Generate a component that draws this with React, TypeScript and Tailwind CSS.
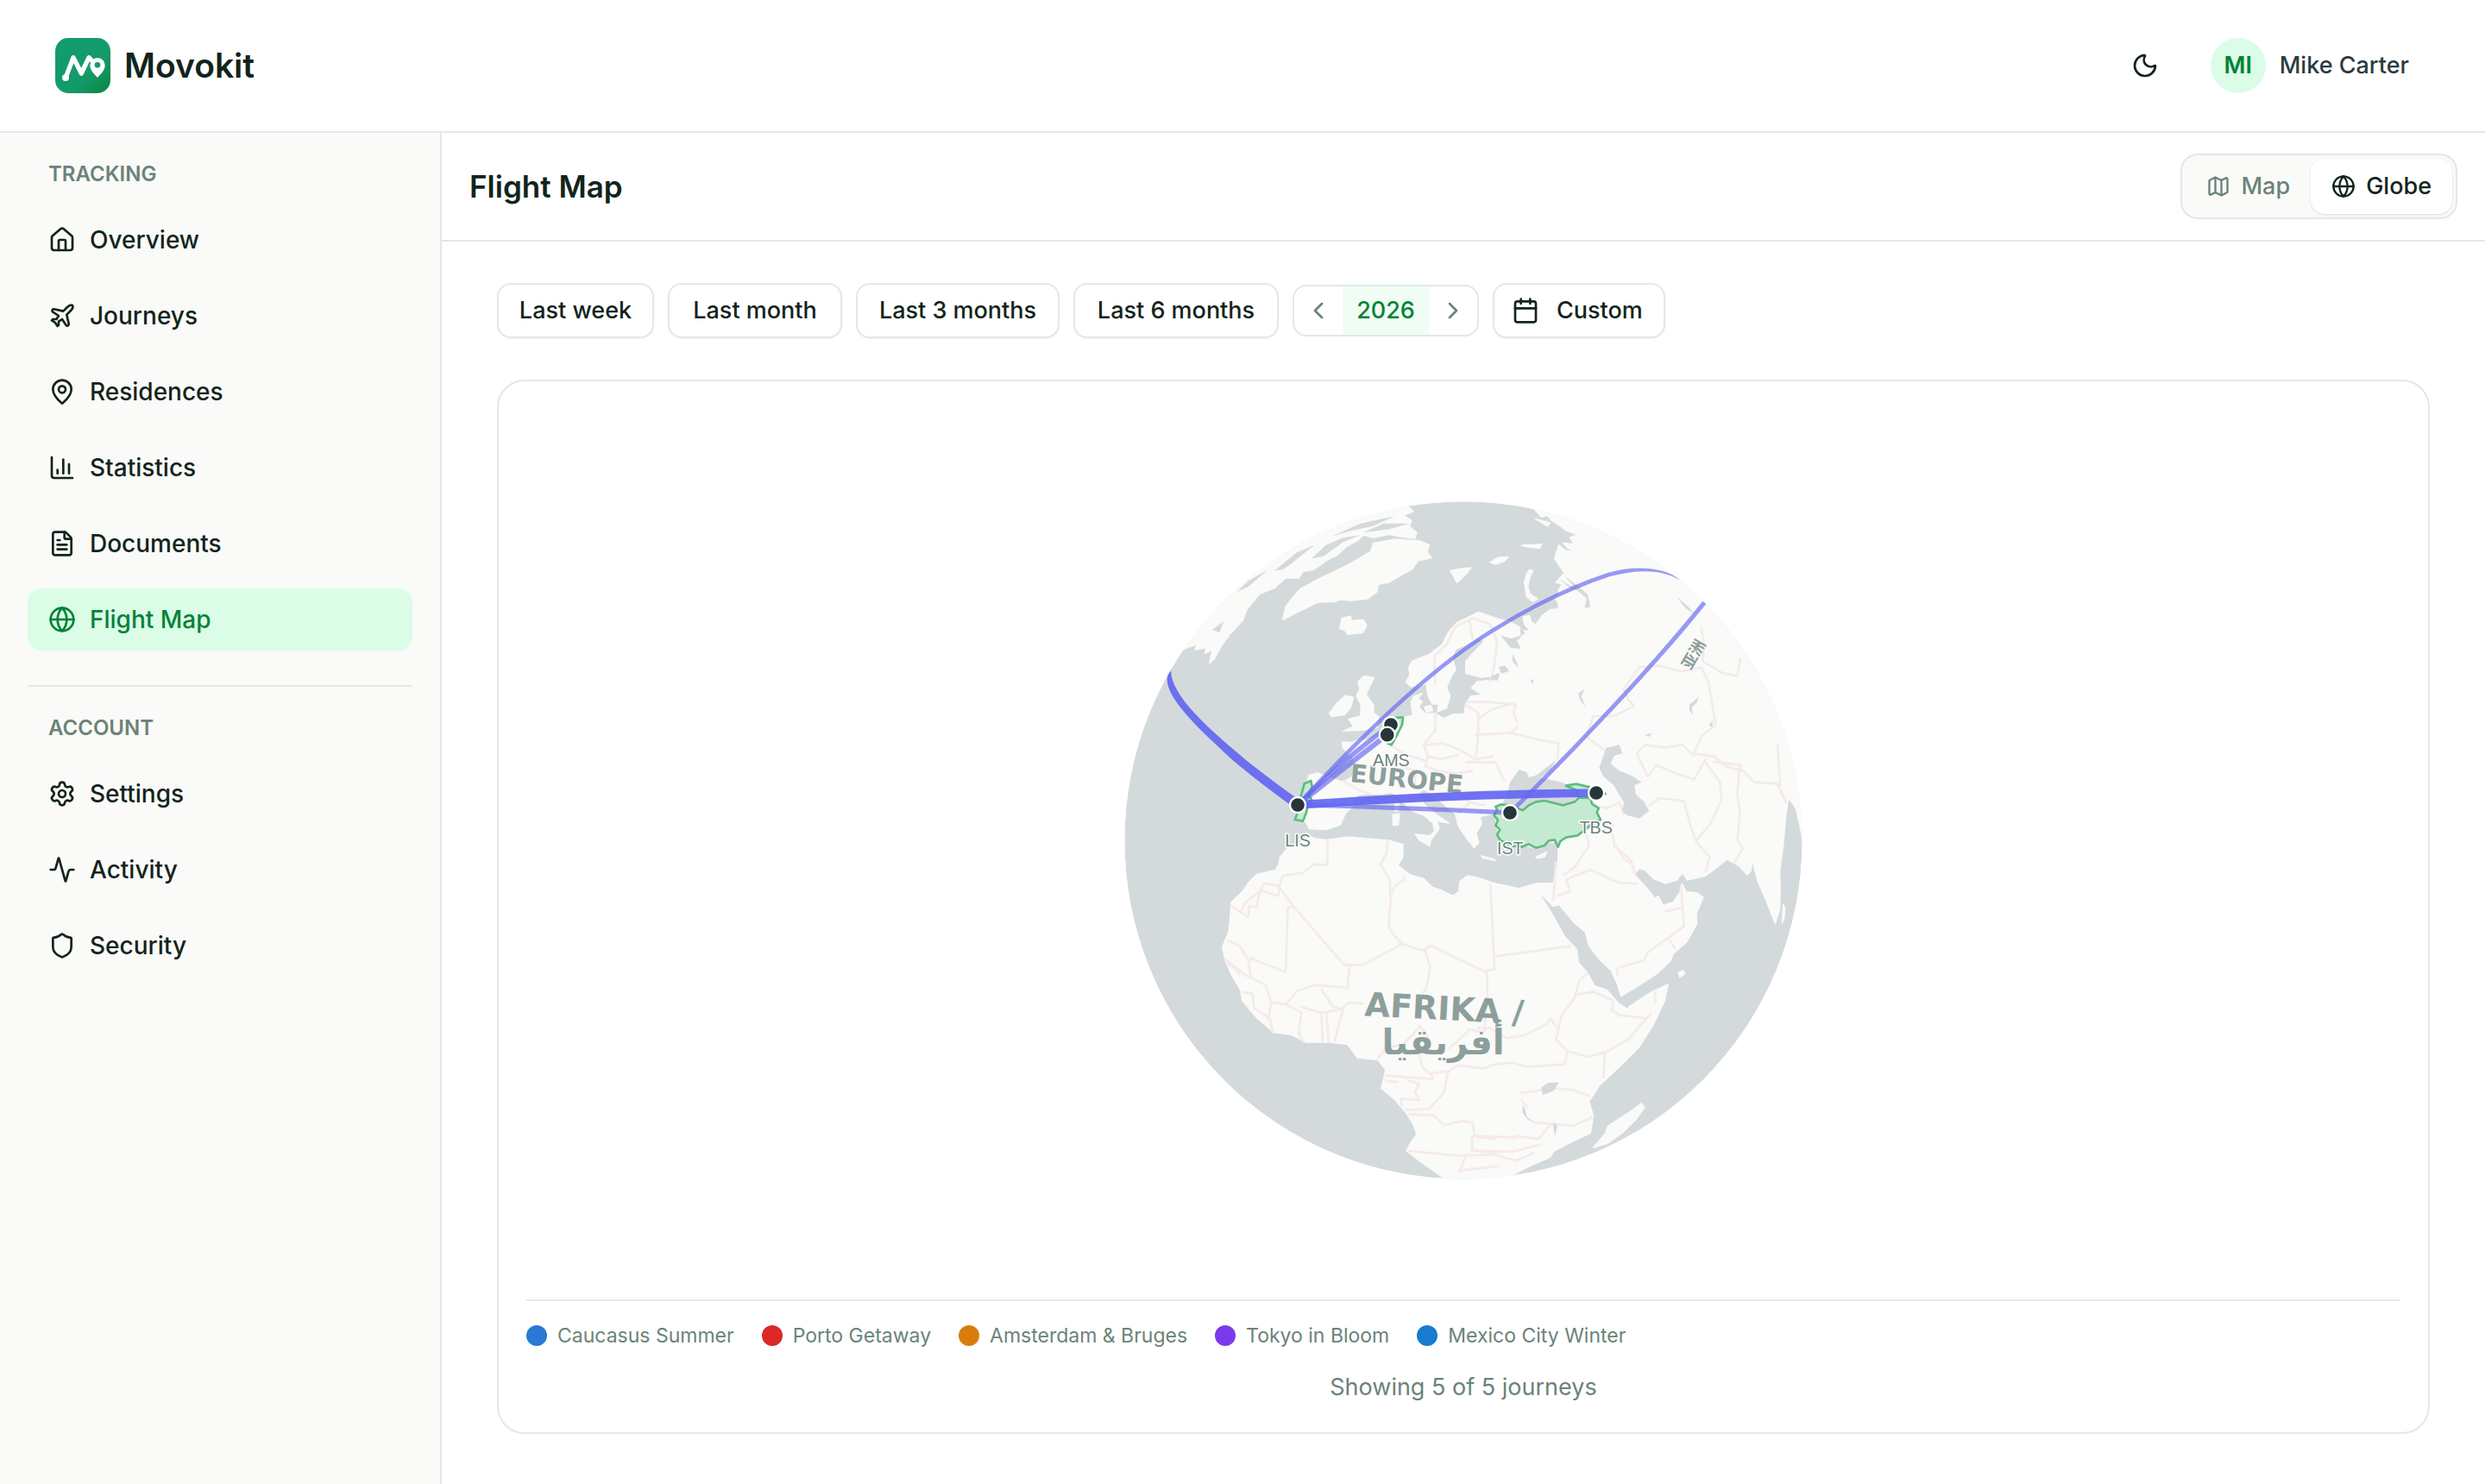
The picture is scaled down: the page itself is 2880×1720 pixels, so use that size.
import { useState } from "react";
import {
  Activity,
  Calendar,
  ChartColumn,
  ChevronLeft,
  ChevronRight,
  FileText,
  Globe,
  House,
  Map as MapIcon,
  MapPin,
  Moon,
  Plane,
  Settings,
  Shield,
  type LucideIcon,
} from "lucide-react";
import clsx from "clsx";

type NavItem = { label: string; icon: LucideIcon };

const TRACKING: NavItem[] = [
  { label: "Overview", icon: House },
  { label: "Journeys", icon: Plane },
  { label: "Residences", icon: MapPin },
  { label: "Statistics", icon: ChartColumn },
  { label: "Documents", icon: FileText },
  { label: "Flight Map", icon: Globe },
];

const ACCOUNT: NavItem[] = [
  { label: "Settings", icon: Settings },
  { label: "Activity", icon: Activity },
  { label: "Security", icon: Shield },
];

const RANGES = [
  { label: "Last week", width: "w-[182px]" },
  { label: "Last month", width: "w-[202px]" },
  { label: "Last 3 months", width: "w-[236px]" },
  { label: "Last 6 months", width: "w-[238px]" },
];

const JOURNEYS = [
  { name: "Caucasus Summer", dot: "bg-[#2a78d6]" },
  { name: "Porto Getaway", dot: "bg-[#dc2828]" },
  { name: "Amsterdam & Bruges", dot: "bg-[#d97b0d]" },
  { name: "Tokyo in Bloom", dot: "bg-[#7c3aed]" },
  { name: "Mexico City Winter", dot: "bg-[#187ad0]" },
];

// Globe geometry, in thirds of a pixel
const LAND = [
  // Eurasia and Africa
  "M1440 40 L1465 92 1490 118 1510 112 1525 130 1550 145 1575 165 1615 180 1588 188 1602 212 1565 208 1580 225 1608 242 1570 232 1550 215 1542 240 1535 262 1552 288 1570 312 1556 326 1540 346 1562 350 1548 372 1552 392 1536 398 1548 418 1550 436 1520 440 1492 460 1470 492 1455 484 1448 460 1425 465 1430 490 1450 515 1420 512 1412 500 1380 482 1340 472 1300 458 1270 448 1240 464 1195 485 1165 520 1145 560 1100 595 1040 618 1028 640 1032 668 1018 690 1035 708 1070 702 1088 696 1095 740 1110 768 1132 768 1128 795 1160 782 1172 740 1160 710 1176 672 1192 648 1180 610 1190 578 1225 562 1270 540 1292 548 1252 590 1226 620 1226 662 1280 675 1340 668 1340 682 1265 690 1246 712 1284 736 1244 740 1226 770 1220 802 1180 804 1150 818 1120 800 1085 802 1062 778 1076 760 1060 750 1075 730 1045 742 1036 762 1042 808 1000 816 960 850 920 882 872 896 862 888 830 902 796 900 800 922 832 950 845 985 830 1022 800 1040 760 1025 710 1008 680 1016 672 1060 652 1110 635 1170 670 1178 682 1202 740 1205 790 1188 808 1148 836 1120 850 1085 880 1080 930 1082 970 1075 1000 1100 1040 1140 1080 1155 1112 1182 1118 1212 1100 1226 1050 1220 1064 1240 1100 1262 1106 1240 1134 1200 1126 1175 1168 1182 1120 1150 1085 1120 1056 1082 1080 1064 1120 1090 1160 1124 1190 1150 1200 1192 1230 1236 1255 1268 1272 1250 1262 1218 1282 1184 1275 1160 1320 1150 1334 1120 1328 1155 1335 1190 1340 1230 1380 1262 1430 1258 1470 1270 1520 1248 1545 1250 1548 1290 1545 1340 1530 1390 1470 1392 1410 1410 1370 1400 1320 1390 1290 1378 1262 1370 1232 1365 1206 1385 1202 1420 1182 1435 1140 1415 1110 1405 1080 1375 1030 1360 990 1328 1008 1300 1008 1256 960 1242 880 1236 820 1230 740 1240 700 1235 680 1226 650 1250 610 1265 580 1300 576 1325 565 1345 500 1360 470 1390 450 1420 410 1458 408 1500 402 1560 380 1612 390 1660 412 1710 442 1760 450 1800 500 1860 560 1910 620 1918 670 1944 750 1944 815 1952 850 1998 920 2005 948 2040 932 2104 980 2144 1020 2192 1044 2230 1056 2265 1036 2290 1020 2322 1070 2360 1120 2395 1180 2440 1300 2440 1400 2400 1450 2374 1520 2344 1530 2325 1580 2298 1660 2260 1670 2200 1655 2150 1690 2095 1760 2030 1830 1960 1880 1880 1918 1800 1930 1742 1870 1770 1810 1810 1785 1825 1760 1805 1770 1782 1830 1745 1890 1706 1938 1662 1948 1636 1995 1595 2030 1532 2028 1496 2052 1440 2030 1424 1992 1420 1978 1392 1970 1424 1948 1456 1912 1468 1895 1436 1882 1445 1870 1424 1812 1360 1830 1340 1850 1346 1880 1376 1920 1392 1960 1380 1980 1355 1996 1380 2060 1366 2100 1336 2135 1308 2175 1330 2205 1362 2218 1348 2222 1310 2240 1380 2270 1450 2302 1532 2318 1480 2320 1410 2318 1350 2330 1260 2340 1150 2348 1095 2374 1130 2390 1200 2400 1260 2440 1200 2440 600 2000 100Z",
  // Arctic Canada and Labrador
  "M1045 98 L1010 112 1038 130 1030 150 1056 172 1050 192 1000 186 960 178 905 190 870 180 850 200 812 220 780 250 740 270 700 300 660 308 645 330 600 330 560 365 510 385 465 440 452 476 430 500 410 522 372 534 404 530 376 566 352 612 335 626 345 580 318 592 325 572 285 580 290 560 245 578 180 560 300 300 600 100 1000 60Z",
  // Greenland
  "M590 475 L600 430 622 400 650 368 720 330 820 282 895 238 905 208 980 195 1065 200 1100 215 1092 240 1108 260 1060 270 1040 300 1005 318 960 345 922 352 918 378 885 402 830 408 790 405 770 412 710 415 640 450Z",
  // Iceland
  "M788 505 L795 470 825 462 830 478 870 475 882 495 868 520 815 526 806 512Z",
  // Svalbard
  "M1172 305 L1200 298 1244 294 1226 318 1196 346 1186 328Z",
  // Great Britain and Ireland
  "M852 690 L872 670 908 676 890 712 880 735 905 770 906 800 924 812 918 850 870 858 800 862 836 846 818 820 860 810 862 770 846 740 858 716Z",
  "M752 800 L778 765 808 738 836 745 826 780 806 805 760 812Z",
  // Zealand, Corsica, Sardinia, Crete, Cyprus
  "M1082 778 L1104 772 1112 790 1090 798Z",
  "M980 1108 L994 1112 990 1140 980 1140Z",
  "M972 1152 L996 1150 992 1188 974 1190Z",
  "M1280 1296 L1320 1306 1330 1312 1286 1304Z",
  "M1470 1300 L1508 1282 1500 1300 1476 1304Z",
  // Novaya Zemlya and Franz Josef Land
  "M1448 300 L1460 305 1448 330 1442 360 1450 385 1476 402 1460 412 1438 395 1430 345 1438 315Z",
  "M1310 275 L1340 258 1374 256 1360 272 1330 282Z",
  "M1420 216 L1490 212 1484 226 1440 222Z",
  "M1468 124 L1520 138 1510 150Z",
  // Madagascar and Sri Lanka
  "M1670 2310 L1712 2260 1720 2236 1790 2190 1838 2156 1848 2170 1820 2210 1770 2260 1720 2296Z",
  "M2326 1530 L2330 1464 2336 1478 2334 1510Z",
  "M1966 1702 L1982 1694 1988 1706 1970 1718Z",
];

const WATER = [
  // Black Sea
  "M1372 1080 L1380 1040 1412 996 1438 1004 1446 1024 1475 1014 1540 962 1520 1000 1486 1024 1560 1040 1612 1062 1620 1085 1600 1108 1565 1118 1500 1102 1470 1106 1440 1124 1425 1140 1380 1125 1355 1112Z",
  // Caspian Sea
  "M1715 920 L1760 910 1771 940 1742 948 1730 976 1760 1000 1805 1018 1838 1040 1812 1050 1818 1082 1846 1108 1864 1140 1830 1166 1785 1154 1770 1140 1776 1110 1740 1050 1705 1020 1690 990 1704 950Z",
  // Red Sea
  "M1486 1430 L1530 1474 1550 1468 1602 1530 1640 1562 1654 1612 1692 1660 1730 1696 1750 1740 1764 1784 1800 1800 1790 1826 1760 1808 1718 1760 1676 1746 1650 1700 1620 1666 1614 1620 1572 1576 1530 1500Z",
  // White Sea, lakes Ladoga and Onega
  "M1414 504 L1418 530 1382 540 1346 528 1366 552 1382 572 1418 576 1405 548 1432 520Z",
  "M1340 640 L1362 634 1378 654 1350 662Z",
  "M1390 594 L1404 624 1410 644 1388 618Z",
  "M1320 668 L1344 660 1338 686 1310 684Z",
  "M1448 680 L1464 688 1458 698Z",
  // Lake Victoria and the rift lakes
  "M1488 2102 L1510 2086 1550 2082 1534 2112 1494 2128Z",
  "M1424 2160 L1434 2180 1438 2202 1462 2222 1440 2212 1424 2190Z",
  "M1530 2224 L1544 2232 1538 2270 1532 2250Z",
  // Yenisei and Ob gulfs, Baikal and Balkhash
  "M1570 324 L1620 360 1650 388 1660 430 1640 434 1646 400 1610 370Z",
  "M1548 330 L1580 352 1640 380 1590 366Z",
  "M1958 394 L2000 430 2022 456 1990 434Z",
  "M2004 770 L2036 744 2030 762 2012 780 2016 806 2004 790Z",
  "M1618 730 L1640 715 1628 740 1642 776 1622 752Z",
  "M1850 876 L1872 868 1866 882Z",
  "M2070 840 L2086 826 2082 848Z",
  // Canadian straits
  "M430 378 L470 340 540 300 470 360Z",
  "M560 305 L640 240 700 215 620 280 590 300Z",
  "M690 262 L740 215 800 190 860 180 800 205 730 255Z",
  "M760 185 L860 140 980 115 900 150 830 165Z",
  "M870 172 L940 140 1030 140 960 160Z",
  "M345 510 L385 480 370 520Z",
];

const BORDERS = [
  // West and north Africa
  "M746 1240 L745 1328 700 1325 660 1355 590 1365 578 1400 526 1392 508 1418 458 1460 445 1490",
  "M410 1470 L470 1508 472 1470 498 1475 512 1415 575 1435 578 1405",
  "M578 1405 L630 1475 608 1475 600 1700 480 1652 470 1670 480 1720",
  "M630 1475 L760 1625 805 1675 868 1675 1005 1602",
  "M955 1245 L950 1290 930 1325 962 1380 965 1460 958 1535 970 1565 1005 1602 1075 1625 1105 1608 1300 1702",
  "M1015 1365 L1010 1380 980 1400 968 1430",
  "M1312 1395 L1326 1690 1300 1695 1302 1800",
  "M1330 1645 L1590 1610",
  "M822 1680 L815 1755 705 1745 640 1765 600 1812 550 1805 530 1745 460 1710 390 1655",
  "M400 1590 L440 1610 468 1652 M395 1670 L430 1690 440 1712 M450 1770 L485 1775 490 1825 545 1860 555 1910",
  "M550 1805 L540 1860 M600 1812 L655 1840 645 1910 660 1940 M655 1822 L725 1842 728 1940 M742 1845 L750 1940 M725 1760 L765 1820 800 1830 770 1940",
  "M725 1842 L790 1830 820 1806 865 1810",
  "M1085 1625 L1102 1680 1090 1755 1065 1790",
  "M1065 1885 L1095 1925 M920 2000 L950 1965 1010 1950 1068 1888",
  "M950 2060 L1110 2072 1108 2052 1165 2045 M1065 1990 L1075 2030 1110 2060 M950 2078 L990 2082 M1025 2075 L1065 2090 1050 2115 1065 2145 1000 2140 1005 2165",
  "M1165 2045 L1150 2120 1100 2175 1020 2180 M1030 2195 L1115 2198 1150 2232 1215 2218 1250 2225 1258 2272 1330 2280",
  "M1165 2045 L1200 2025 1290 2035 1330 2020 1390 2015 1440 2030",
  "M1170 1965 L1240 1900 1290 1910 1300 1800 M1270 1895 L1310 1895 1370 1930 1430 1920 1510 1880 1520 1860 1545 1895",
  "M1030 2322 L1200 2338 1330 2335 M1248 2275 L1250 2320 1330 2330 1340 2340 M1205 2395 L1225 2340 M1205 2390 L1340 2375",
  // East Africa and Arabia
  "M1605 1790 L1620 1730 1650 1705 M1605 1790 L1560 1850 1540 1935 1580 1975 1650 1995 1715 1978 1790 1935 1870 1845",
  "M1605 1780 L1670 1768 1740 1800 M1730 1830 L1760 1850 1850 1860 M1740 1800 L1735 1835 M1885 1770 L1885 1805",
  "M1710 1980 L1705 2065 M1440 2030 L1570 2020 1580 1975 M1540 2105 L1600 2110 1655 2130 M1420 2120 L1530 2105",
  "M1420 2145 L1440 2170 M1460 2222 L1530 2228 1600 2235 1665 2205 M1400 2270 L1480 2280 1520 2230 M1250 2270 L1400 2275 M1245 2320 L1390 2325 1485 2300 M1340 2340 L1400 2355 1460 2330",
  "M1545 1435 L1590 1420 1575 1380 1605 1365 1660 1345 1760 1390 1820 1392",
  "M1530 1450 L1540 1320 M1610 1330 L1570 1360 M1740 1260 L1800 1310 1815 1360",
  "M1752 1710 L1755 1685 1845 1660 1860 1630 1925 1585 1985 1540 1980 1475 1920 1490 M1935 1590 L1955 1620 M1975 1400 L1980 1475",
  "M1640 1200 L1655 1260 1605 1335 M1730 1200 L1745 1260 1780 1310 1800 1320",
  // Europe
  "M800 1035 L850 1065 890 1080 M1120 800 L1120 860 1080 910 1095 950 1140 960 M965 910 L1010 940 1085 965",
  "M1080 910 L1150 905 1210 930 1260 960 1320 950 M1140 960 L1200 945 M1095 950 L1085 985 1130 1000",
  "M1225 770 L1270 800 1270 870 1262 950 M1230 760 L1300 760 1400 770 1392 800 1405 830 M1270 820 L1310 790 1390 765",
  "M1262 875 L1380 868 1405 850 M1380 868 L1470 890 1550 905 1545 955 M1230 970 L1330 970 1360 1035",
  "M1130 1000 L1190 1010 1250 1000 M1190 1010 L1200 1080 1240 1110 1290 1120 M1200 1150 L1240 1110 M1000 985 L1050 1000 1050 1060",
  "M1120 700 L1118 600 1160 560 1190 500 1250 470 M1240 480 L1250 540 M1250 470 L1310 490 1335 550 1325 640 1310 690",
  // Central Asia
  "M1645 880 L1710 930 M1645 880 L1670 810 1740 810 1812 775 1790 750 1775 715 1830 640 1900 635 1975 655 2045 640",
  "M2045 640 L2070 690 2095 840 2045 880 2020 940 2090 950 2130 985 2190 1000 2230 1040 2310 1045 2340 1110",
  "M1820 940 L1850 910 1920 920 1980 910 2020 950 M1820 940 L1860 1020 1890 980 1960 1010 2020 1030 2060 960",
  "M1865 1120 L1900 1095 1985 1105 2010 1200 2030 1250 2075 1300 2060 1350 M2060 970 L2110 1040 2115 1100 2080 1180 2030 1240",
  "M2090 970 L2180 980 2170 1080 2180 1150 2170 1240 2190 1270 2160 1320 M2310 910 L2320 1050 M2045 500 L2055 560 2050 620 2120 660 2170 670 2180 610",
  "M1660 1120 L1720 1130 1760 1110 1775 1150 M1660 1180 L1740 1190",
];

const COUNTRIES = [
  // Turkey
  "M1330 1125 L1350 1117 1380 1120 1425 1138 1445 1120 1470 1108 1500 1104 1565 1120 1605 1108 1620 1093 1660 1095 1665 1115 1688 1130 1682 1145 1695 1170 1660 1190 1615 1225 1575 1232 1555 1245 1547 1265 1535 1240 1515 1243 1500 1260 1470 1268 1445 1255 1420 1265 1380 1260 1345 1240 1335 1222 1345 1205 1330 1190 1338 1172 1325 1155 1335 1135Z",
  // Georgia
  "M1575 1052 L1610 1046 1660 1058 1712 1080 1700 1086 1660 1095 1620 1093 1612 1068Z",
  // Portugal
  "M665 1045 L688 1035 692 1055 680 1085 690 1100 675 1130 672 1145 660 1175 632 1170 642 1145 650 1100Z",
  // Netherlands and Belgium
  "M985 815 L1008 815 1005 840 990 870 968 910 955 905 925 870 960 855Z",
];

// Wider strokes carry more flights
const ROUTES = [
  { d: "M642 1119 Q900 1124 1380 1146", width: 16, busy: false },
  { d: "M642 1119 Q800 960 966 840", width: 16, busy: false },
  { d: "M642 1119 Q810 985 953 875", width: 18, busy: false },
  { d: "M642 1119 C820 925 1080 660 1320 512 C1480 413 1620 352 1730 316", width: 14, busy: false },
  { d: "M1380 1146 C1600 930 1880 635 2056 415", width: 15, busy: false },
  { d: "M642 1119 Q1150 1082 1680 1077", width: 29, busy: true },
];

const AIRPORTS = [
  { x: 966, y: 840 },
  { x: 953, y: 875, code: "AMS", labelX: 967, labelY: 984 },
  { x: 642, y: 1119, code: "LIS", labelX: 642, labelY: 1262 },
  { x: 1380, y: 1146, code: "IST", labelX: 1381, labelY: 1290 },
  { x: 1680, y: 1077, code: "TBS", labelX: 1679, labelY: 1219 },
];

function Logo() {
  return (
    <svg viewBox="0 0 192 192" className="size-16" aria-hidden="true">
      <defs>
        <linearGradient id="logo-fill" x1="0" y1="0" x2="1" y2="1">
          <stop offset="0.6" stopColor="#149b6b" />
          <stop offset="1" stopColor="#0a8540" />
        </linearGradient>
      </defs>
      <rect width="192" height="192" rx="46" fill="url(#logo-fill)" />
      <path d="M37 136 L63 68 L91 123 L117 68 L132 84" fill="none" stroke="#fff" strokeWidth="16" strokeLinecap="round" strokeLinejoin="round" />
      <circle cx="36" cy="138" r="12" fill="#fff" />
      <path d="M147 138 C137 126 121 113 121 95 A26 26 0 0 1 173 95 C173 113 157 126 147 138Z" fill="#fff" />
      <circle cx="147" cy="94" r="10" fill="#149b6b" />
    </svg>
  );
}

function NavSection({ title, items, active }: { title: string; items: NavItem[]; active?: string }) {
  return (
    <div className="pt-4">
      <h2 className="flex h-16 items-center px-6 text-2xl font-semibold text-[#6b8378]">{title}</h2>
      <ul className="mt-2 space-y-4">
        {items.map(({ label, icon: Icon }) => (
          <li key={label}>
            <a
              href="#"
              aria-current={label === active ? "page" : undefined}
              className={clsx(
                "flex h-18 items-center gap-4 rounded-2xl px-6 text-[28px] font-medium",
                label === active ? "bg-green-100 text-green-700" : "text-[#12241b] hover:bg-green-50",
              )}
            >
              <Icon className="size-8" />
              {label}
            </a>
          </li>
        ))}
      </ul>
    </div>
  );
}

function FlightGlobe() {
  return (
    <svg viewBox="18 42 2400 2400" className="size-[800px]" role="img" aria-label="Globe with flown routes">
      <defs>
        <clipPath id="sphere">
          <circle cx="1218" cy="1242" r="1178" />
        </clipPath>
      </defs>
      <g clipPath="url(#sphere)">
        <circle cx="1218" cy="1242" r="1178" fill="#d4dadc" />
        <g fill="#fafaf8" stroke="#fafaf8" strokeWidth="4" strokeLinejoin="round">
          {LAND.map((d) => (
            <path key={d} d={d} />
          ))}
        </g>
        <g fill="none" stroke="#f5eaea" strokeWidth="8" strokeLinejoin="round" strokeLinecap="round">
          {BORDERS.map((d) => (
            <path key={d} d={d} />
          ))}
        </g>
        <g fill="#d4dadc">
          {WATER.map((d) => (
            <path key={d} d={d} />
          ))}
        </g>
        <g fill="#8d9f9c" fontFamily="'DejaVu Sans', sans-serif" fontWeight="700">
          <text x="822" y="1038" fontSize="87" transform="rotate(6 822 1038)">EUROPE</text>
          <text x="1150" y="1866" fontSize="114" textAnchor="middle" transform="rotate(3 1150 1866)">AFRIKA /</text>
          <text x="1148" y="1986" fontSize="122" textAnchor="middle" direction="rtl">أفريقيا</text>
          <text x="2008" y="652" fontSize="54" fontFamily="'Noto Sans CJK SC', sans-serif" transform="rotate(-60 2008 652)">亚洲</text>
        </g>
      </g>
      <g fill="#c4ebd1" stroke="#5fbb82" strokeWidth="8" strokeLinejoin="round">
        {COUNTRIES.map((d) => (
          <path key={d} d={d} />
        ))}
      </g>
      <g fill="none" stroke="#6366f1">
        {ROUTES.map((r) => (
          <path key={r.d} d={r.d} strokeWidth={r.width} strokeOpacity={r.busy ? 0.92 : 0.66} />
        ))}
      </g>
      <path
        d="M1728 310 C1810 286 1920 290 1972 338 C1910 298 1820 300 1732 323Z"
        fill="#6366f1"
        fillOpacity="0.66"
      />
      <path
        d="M201 651 C202 740 330 852 465 965 Q560 1040 652 1105 L632 1130 Q520 1050 430 975 C310 865 170 740 190 668Z"
        fill="#6366f1"
        fillOpacity="0.92"
      />
      <g fill="#263638" stroke="#fff" strokeWidth="7">
        {AIRPORTS.map((a) => (
          <circle key={`${a.x}-${a.y}`} cx={a.x} cy={a.y} r="27" />
        ))}
      </g>
      <g
        fill="#6b8378"
        stroke="#fff"
        strokeWidth="9"
        strokeLinejoin="round"
        paintOrder="stroke"
        fontFamily="'Liberation Sans', Arial, sans-serif"
        fontSize="59"
        textAnchor="middle"
      >
        {AIRPORTS.filter((a) => a.code).map((a) => (
          <text key={a.code} x={a.labelX} y={a.labelY}>
            {a.code}
          </text>
        ))}
      </g>
    </svg>
  );
}

export default function App() {
  const [view, setView] = useState<"map" | "globe">("globe");
  const [year, setYear] = useState(2026);

  const views = [
    { id: "map" as const, label: "Map", icon: MapIcon },
    { id: "globe" as const, label: "Globe", icon: Globe },
  ];

  return (
    <div className="flex min-h-screen flex-col bg-white font-['Inter',sans-serif] text-[#12241b]">
      <header className="flex h-[154px] items-center justify-between border-b-2 border-[#e5e7e8] px-16">
        <a href="#" className="flex items-center gap-4">
          <Logo />
          <span className="text-[39px] font-semibold">Movokit</span>
        </a>
        <div className="flex items-center gap-10">
          <button type="button" aria-label="Toggle theme" className="grid size-18 place-items-center rounded-2xl">
            <Moon className="size-8" />
          </button>
          <button type="button" className="flex items-center gap-4 pr-6">
            <span className="grid size-16 place-items-center rounded-full bg-green-100 text-[27px] font-semibold text-green-700">
              MI
            </span>
            <span className="text-[27px] font-medium text-[#2b3b40]">Mike Carter</span>
          </button>
        </div>
      </header>

      <div className="flex flex-1">
        <aside className="w-[512px] shrink-0 border-r-2 border-[#dfeae4] bg-[#fafaf8] px-8">
          <nav>
            <NavSection title="TRACKING" items={TRACKING} active="Flight Map" />
            <hr className="mt-10 border-t-2 border-[#dfeae4]" />
            <NavSection title="ACCOUNT" items={ACCOUNT} />
          </nav>
        </aside>

        <main className="min-w-0 flex-1">
          <div className="flex h-[126px] items-center justify-between border-b-2 border-[#dfeae4] px-8">
            <h1 className="text-[35px] font-semibold">Flight Map</h1>
            <div className="flex rounded-[20px] border-2 border-[#dfeae4] bg-[#fafaf8] p-1">
              {views.map(({ id, label, icon: Icon }) => (
                <button
                  key={id}
                  type="button"
                  aria-pressed={view === id}
                  onClick={() => setView(id)}
                  className={clsx(
                    "flex h-16 items-center gap-3 rounded-2xl px-6 text-[27px] font-medium",
                    view === id ? "bg-white shadow-sm" : "text-[#6b8378]",
                  )}
                >
                  <Icon className="size-7" />
                  {label}
                </button>
              ))}
            </div>
          </div>

          <div className="px-16 pt-12 pb-14">
            <div className="flex items-center gap-4 text-[27px] font-medium">
              {RANGES.map((r) => (
                <button
                  key={r.label}
                  type="button"
                  className={clsx("h-16 rounded-2xl border-2 border-[#dfeae4] whitespace-nowrap shadow-xs", r.width)}
                >
                  {r.label}
                </button>
              ))}
              <div className="flex h-15 overflow-hidden rounded-2xl border-2 border-[#dfeae4]">
                <button
                  type="button"
                  aria-label="Previous year"
                  onClick={() => setYear(year - 1)}
                  className="grid w-14 place-items-center text-[#6b8378]"
                >
                  <ChevronLeft className="size-8" />
                </button>
                <button type="button" className="w-25 bg-green-50 text-green-700">
                  {year}
                </button>
                <button
                  type="button"
                  aria-label="Next year"
                  onClick={() => setYear(year + 1)}
                  className="grid w-14 place-items-center text-[#6b8378]"
                >
                  <ChevronRight className="size-8" />
                </button>
              </div>
              <button
                type="button"
                className="flex h-16 w-[200px] items-center gap-5 rounded-2xl border-2 border-[#dfeae4] px-5 shadow-xs"
              >
                <Calendar className="size-8" />
                Custom
              </button>
            </div>

            <section className="mt-12 rounded-[32px] border-2 border-[#dfeae4] p-8">
              <div className="flex h-[1000px] items-center justify-center">
                <FlightGlobe />
              </div>
              <ul className="mt-8 flex flex-wrap gap-x-8 border-t-2 border-[#dfeae4] pt-6 text-[23px] text-[#6b8378]">
                {JOURNEYS.map((j) => (
                  <li key={j.name} className="flex h-8 items-center gap-3">
                    <span className={clsx("size-6 rounded-full", j.dot)} />
                    {j.name}
                  </li>
                ))}
              </ul>
              <p className="mt-6 text-center text-[27px] leading-10 text-[#6b8378]">Showing 5 of 5 journeys</p>
            </section>
          </div>
        </main>
      </div>
    </div>
  );
}
